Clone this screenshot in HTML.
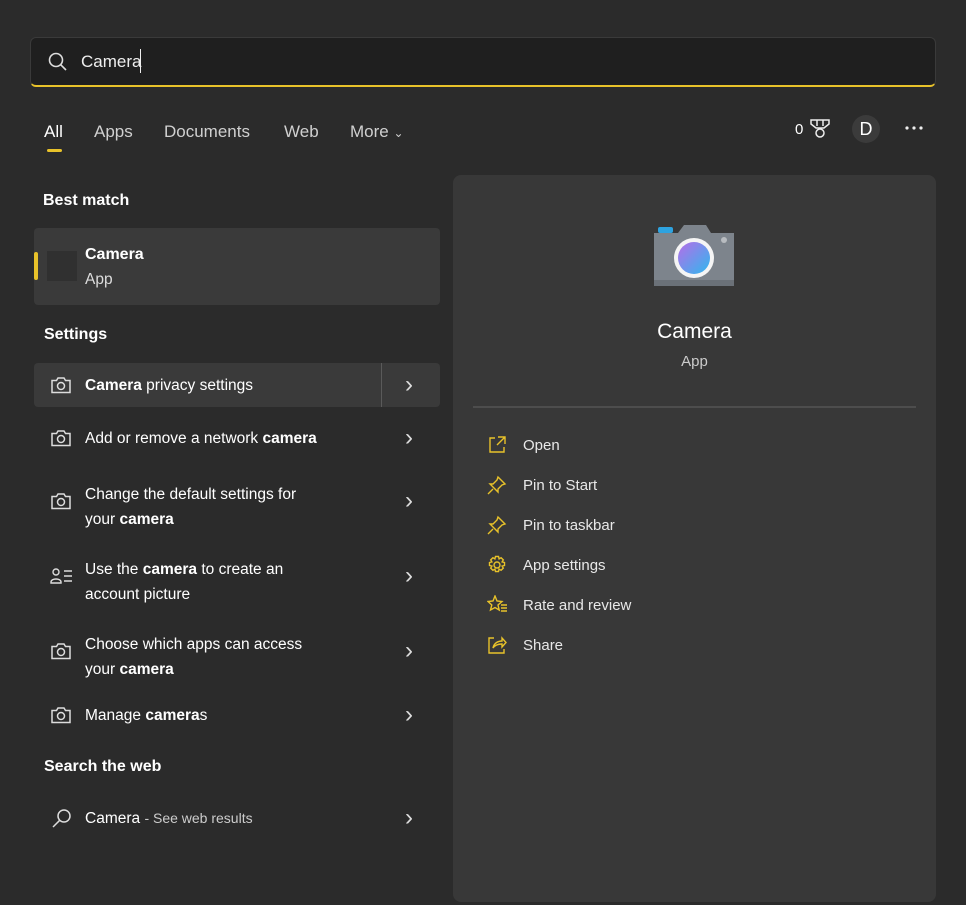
<!DOCTYPE html>
<html><head><meta charset="utf-8"><style>
*{margin:0;padding:0;box-sizing:border-box}
body{width:966px;height:905px;background:#2b2b2b;font-family:"Liberation Sans",sans-serif;color:#fff;position:relative;overflow:hidden;font-size:15.5px}
.a{position:absolute;white-space:nowrap}
.search{left:30px;top:37px;width:906px;height:50px;background:#1f1f1f;border:1px solid #3a3a3a;border-radius:6px;border-bottom:2px solid #e8c22a}
.tab{top:122px;font-size:17px;color:#d0d0d0}
.hdr{font-weight:bold;font-size:16px}
.chev{color:#ddd;font-size:24px;line-height:20px}
.rp{left:453px;top:175px;width:483px;height:727px;background:#383838;border-radius:8px}
.act{left:523px;color:#e8e8e8;font-size:15px}
svg.i{position:absolute}
b{font-weight:bold}
</style></head><body>
<div class="a search"></div>
<svg class="i" style="left:47px;top:51px" width="22" height="22" viewBox="0 0 22 22"><circle cx="9" cy="9" r="6.5" fill="none" stroke="#ddd" stroke-width="1.6"/><line x1="13.8" y1="13.8" x2="19" y2="19" stroke="#ddd" stroke-width="1.6"/></svg>
<div class="a" style="left:81px;top:52px;font-size:17px;color:#eee">Camera</div>
<div class="a" style="left:140px;top:49px;width:1px;height:24px;background:#eee"></div>

<div class="a tab" style="left:44px;color:#fff">All</div>
<div class="a" style="left:47px;top:149px;width:15px;height:3px;border-radius:2px;background:#e8c22a"></div>
<div class="a tab" style="left:94px">Apps</div>
<div class="a tab" style="left:164px">Documents</div>
<div class="a tab" style="left:284px">Web</div>
<div class="a tab" style="left:350px">More <span style="font-size:12px">&#8964;</span></div>
<div class="a" style="left:795px;top:121px;font-size:15px">0</div>
<svg class="i" style="left:809px;top:118px" width="22" height="22" viewBox="0 0 22 22" fill="none" stroke="#eee" stroke-width="1.5"><path d="M2 2h18v4l-5 4H7L2 6z M8 2v6 M14 2v6"/><circle cx="11" cy="15" r="4"/></svg>
<div class="a" style="left:852px;top:115px;width:28px;height:28px;border-radius:50%;background:#3b3b3b;text-align:center;line-height:28px;font-size:18px">D</div>
<svg class="i" style="left:905px;top:125px" width="20" height="6"><circle cx="2" cy="3" r="1.6" fill="#eee"/><circle cx="9" cy="3" r="1.6" fill="#eee"/><circle cx="16" cy="3" r="1.6" fill="#eee"/></svg>

<div class="a hdr" style="left:43px;top:192px">Best match</div>
<div class="a" style="left:34px;top:228px;width:406px;height:77px;background:#3a3a3a;border-radius:4px"></div>
<div class="a" style="left:34px;top:252px;width:4px;height:28px;background:#e8c22a;border-radius:2px"></div>
<div class="a" style="left:47px;top:251px;width:30px;height:30px;background:#303030"></div>
<div class="a" style="left:85px;top:246px;font-weight:bold;font-size:16px">Camera</div>
<div class="a" style="left:85px;top:271px;color:#ddd">App</div>

<div class="a hdr" style="left:44px;top:326px">Settings</div>
<div class="a" style="left:34px;top:363px;width:406px;height:44px;background:#3a3a3a;border-radius:4px"></div>
<div class="a" style="left:381px;top:363px;width:1px;height:44px;background:#5a5a5a"></div>

<svg width="0" height="0" style="position:absolute"><defs><g id="cam" fill="none" stroke="#ddd" stroke-width="1.5"><path d="M2 6.5h4.5l1.5-2.5h6l1.5 2.5H20v12H2z"/><circle cx="11" cy="12" r="3.5"/></g></defs></svg>
<svg class="i" style="left:50px;top:374px" width="22" height="22"><use href="#cam"/></svg>
<div class="a" style="left:85px;top:377px"><b>Camera</b> privacy settings</div>
<div class="a chev" style="left:405px;top:375px">&#8250;</div>

<svg class="i" style="left:50px;top:427px" width="22" height="22"><use href="#cam"/></svg>
<div class="a" style="left:85px;top:430px">Add or remove a network <b>camera</b></div>
<div class="a chev" style="left:405px;top:428px">&#8250;</div>

<svg class="i" style="left:50px;top:490px" width="22" height="22"><use href="#cam"/></svg>
<div class="a" style="left:85px;top:482px;line-height:25px">Change the default settings for<br>your <b>camera</b></div>
<div class="a chev" style="left:405px;top:491px">&#8250;</div>

<svg class="i" style="left:50px;top:565px" width="24" height="22" fill="none" stroke="#ddd" stroke-width="1.4"><circle cx="6" cy="7" r="3"/><path d="M1 17c0-4 10-4 10 0v1H1z M14 6h8 M14 11h8 M14 16h8"/></svg>
<div class="a" style="left:85px;top:557px;line-height:25px">Use the <b>camera</b> to create an<br>account picture</div>
<div class="a chev" style="left:405px;top:566px">&#8250;</div>

<svg class="i" style="left:50px;top:640px" width="22" height="22"><use href="#cam"/></svg>
<div class="a" style="left:85px;top:632px;line-height:25px">Choose which apps can access<br>your <b>camera</b></div>
<div class="a chev" style="left:405px;top:641px">&#8250;</div>

<svg class="i" style="left:50px;top:704px" width="22" height="22"><use href="#cam"/></svg>
<div class="a" style="left:85px;top:707px">Manage <b>camera</b>s</div>
<div class="a chev" style="left:405px;top:705px">&#8250;</div>

<div class="a hdr" style="left:44px;top:758px">Search the web</div>
<svg class="i" style="left:51px;top:807px" width="22" height="22" fill="none" stroke="#ddd" stroke-width="1.5"><circle cx="13" cy="9" r="6"/><line x1="8.7" y1="13.3" x2="2" y2="20"/></svg>
<div class="a" style="left:85px;top:810px">Camera <span style="font-size:14px;color:#ccc">- See web results</span></div>
<div class="a chev" style="left:405px;top:808px">&#8250;</div>

<div class="a rp"></div>
<svg class="i" style="left:653px;top:222px" width="82" height="66" viewBox="0 0 82 66"><rect x="5" y="5" width="15" height="6" rx="2" fill="#2ea3e0"/><path d="M1 11h24l6-8h22l5 8h23v53H1z" fill="#7d848c"/><rect x="1" y="58" width="80" height="6" fill="#6b7178"/><circle cx="71" cy="18" r="3" fill="#b8bcc0"/><circle cx="41" cy="36" r="20" fill="#f5f5f5"/><defs><linearGradient id="g" x1="0" y1="0" x2="1" y2="1"><stop offset="0" stop-color="#b66de8"/><stop offset="1" stop-color="#2fb8ee"/></linearGradient></defs><circle cx="41" cy="36" r="16" fill="url(#g)"/></svg>
<div class="a" style="left:453px;width:483px;text-align:center;top:320px;font-size:21px">Camera</div>
<div class="a" style="left:453px;width:483px;text-align:center;top:353px;color:#ccc;font-size:15px">App</div>
<div class="a" style="left:473px;top:406px;width:443px;height:2px;background:#4d4d4d"></div>

<svg class="i" style="left:487px;top:435px" width="20" height="20" fill="none" stroke="#e8c22a" stroke-width="1.4"><path d="M8 3H3v14h14v-5 M11 2h7v7 M18 2l-8 8"/></svg>
<div class="a act" style="top:437px">Open</div>
<svg class="i" style="left:487px;top:475px" width="20" height="20" fill="none" stroke="#e8c22a" stroke-width="1.4"><path d="M11 2l7 7-3 1-4 4 0 3-8-8 3 0 4-4z M6 14l-5 5"/></svg>
<div class="a act" style="top:477px">Pin to Start</div>
<svg class="i" style="left:487px;top:515px" width="20" height="20" fill="none" stroke="#e8c22a" stroke-width="1.4"><path d="M11 2l7 7-3 1-4 4 0 3-8-8 3 0 4-4z M6 14l-5 5"/></svg>
<div class="a act" style="top:517px">Pin to taskbar</div>
<svg class="i" style="left:487px;top:555px" width="20" height="20" fill="none" stroke="#e8c22a" stroke-width="1.4"><circle cx="10" cy="10" r="3"/><path d="M8.5 1.5h3l.6 2.4 2-1.2 2.2 2.2-1.2 2 2.4.6v3l-2.4.6 1.2 2-2.2 2.2-2-1.2-.6 2.4h-3l-.6-2.4-2 1.2-2.2-2.2 1.2-2-2.4-.6v-3l2.4-.6-1.2-2 2.2-2.2 2 1.2z"/></svg>
<div class="a act" style="top:557px">App settings</div>
<svg class="i" style="left:487px;top:595px" width="22" height="20" fill="none" stroke="#e8c22a" stroke-width="1.4"><path d="M8 1l2 5 5 .5-4 3.5 1.2 5L8 12.5 3.5 15 4.8 10 1 6.5 6 6z M14 10h6 M14 13h6 M14 16h6"/></svg>
<div class="a act" style="top:597px">Rate and review</div>
<svg class="i" style="left:487px;top:635px" width="20" height="20" fill="none" stroke="#e8c22a" stroke-width="1.4"><path d="M7 3H2v15h15v-4 M6 13c1-5 5-7 9-7V3l4 4.5-4 4.5V9c-4 0-7 1-9 4z"/></svg>
<div class="a act" style="top:637px">Share</div>
</body></html>
